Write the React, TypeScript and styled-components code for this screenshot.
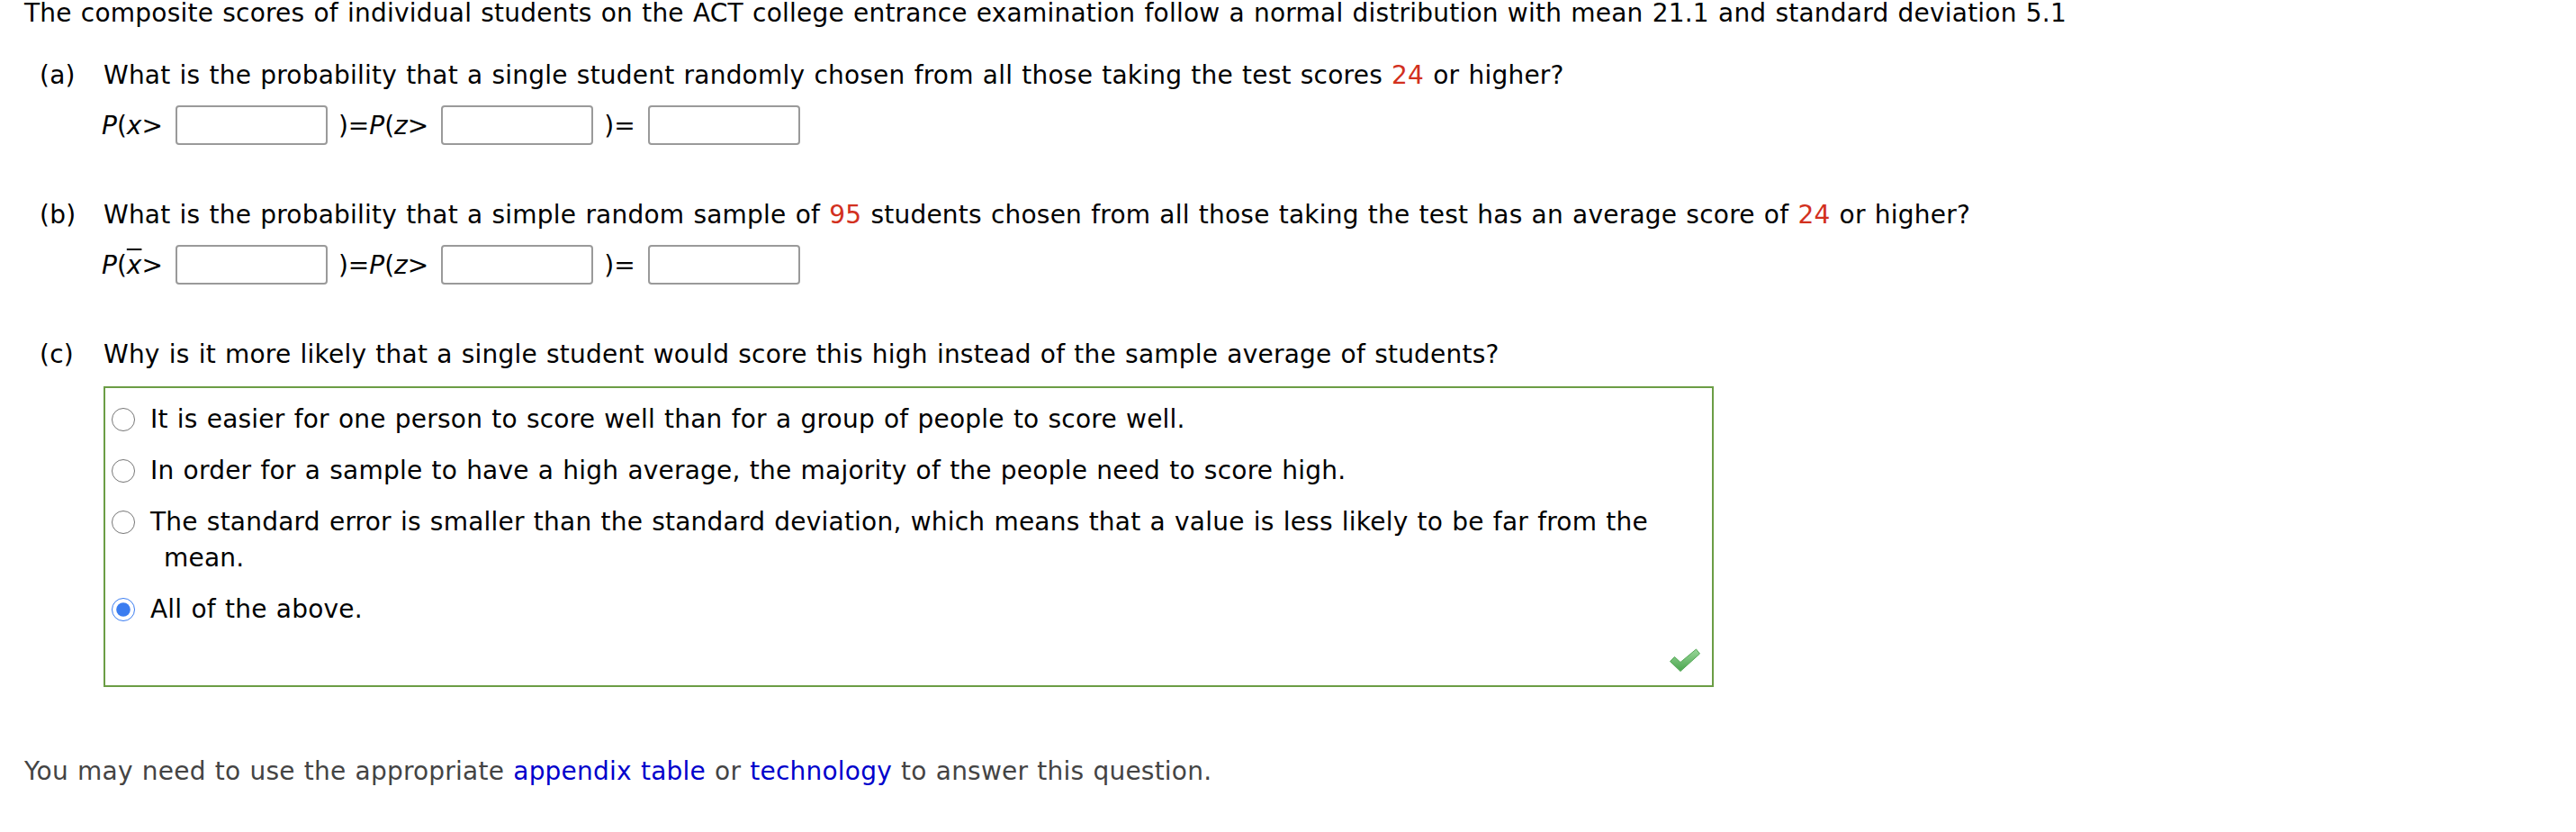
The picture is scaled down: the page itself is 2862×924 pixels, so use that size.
import React from 'react';
import styled, { createGlobalStyle } from 'styled-components';

const GlobalStyle = createGlobalStyle`
  html, body {
    margin: 0;
    padding: 0;
    background: #ffffff;
  }
  body {
    font-family: 'DejaVu Sans', Verdana, sans-serif;
    color: #000000;
  }
`;

const Page = styled.div`
  padding: 0 27px;
  font-size: 28px;
  letter-spacing: 0.22px;
  word-spacing: 1px;
`;

const Intro = styled.p`
  margin: 0;
  line-height: 30px;
  white-space: nowrap;
`;

const Part = styled.section<{ $top: number }>`
  display: grid;
  grid-template-columns: 71px 1fr;
  margin-left: 17px;
  margin-top: ${(p) => p.$top}px;
`;

const Label = styled.div`
  line-height: 30px;
`;

const Body = styled.div`
  display: flex;
  flex-direction: column;
  align-items: flex-start;
`;

const Question = styled.div`
  line-height: 30px;
  white-space: nowrap;
`;

const Hot = styled.span`
  color: #d2301e;
`;

const EqRow = styled.div`
  display: flex;
  align-items: center;
  height: 44px;
  margin-top: 18px;
  margin-left: -2px;
  white-space: nowrap;
  letter-spacing: 0;
`;

const Var = styled.i`
  font-style: italic;
`;

const Bar = styled.i`
  font-style: italic;
  text-decoration: overline;
  text-decoration-thickness: 2px;
`;

const AnswerBox = styled.input.attrs({ type: 'text' })`
  box-sizing: border-box;
  width: 169px;
  height: 44px;
  margin: 0 12px 0 14px;
  border: 2px solid #9a9a9a;
  border-radius: 4px;
  background: #ffffff;
  font: inherit;
  outline: none;
`;

const Choices = styled.div`
  box-sizing: border-box;
  width: 1789px;
  margin-top: 20px;
  border: 2px solid #6b9d45;
  padding: 15px 8px 13px 7px;
  display: flex;
  flex-direction: column;
  gap: 17px;
`;

const Option = styled.label`
  display: flex;
  align-items: flex-start;
  gap: 17px;
`;

const Radio = styled.input.attrs({ type: 'radio', name: 'why' })`
  width: 26px;
  height: 26px;
  margin: 7px 0 0 0;
  flex: none;
  accent-color: #3a7cf0;
`;

const OptionText = styled.span`
  line-height: 40px;
  padding-left: 15px;
  text-indent: -15px;
`;

const CheckRow = styled.div`
  display: flex;
  justify-content: flex-end;
  margin-top: 4px;
  padding-right: 4px;
`;

const Footer = styled.p`
  margin: 79px 0 0;
  line-height: 30px;
  color: #444444;
  white-space: nowrap;
`;

const Link = styled.a`
  color: #0000cc;
  text-decoration: none;
`;

const CheckMark = () => (
  <svg width="36" height="30" viewBox="0 0 36 30">
    <defs>
      <linearGradient id="ok" x1="0" y1="0" x2="0" y2="1">
        <stop offset="0" stopColor="#9ad69a" />
        <stop offset="1" stopColor="#4aa64e" />
      </linearGradient>
    </defs>
    <path
      d="M1.5 16.5 L6.5 11.5 L13 17.5 L30.5 3 L34.5 8 L13 27.5 Z"
      fill="url(#ok)"
      stroke="#55a857"
      strokeWidth="1"
      strokeLinejoin="round"
    />
  </svg>
);

const App = () => (
  <>
    <GlobalStyle />
    <Page>
      <Intro>
        The composite scores of individual students on the ACT college entrance examination follow a
        normal distribution with mean 21.1 and standard deviation 5.1
      </Intro>

      <Part $top={39}>
        <Label>(a)</Label>
        <Body>
          <Question>
            What is the probability that a single student randomly chosen from all those taking the test
            scores <Hot>24</Hot> or higher?
          </Question>
          <EqRow>
            <Var>P</Var>(<Var>x</Var>&gt;
            <AnswerBox />
            )=<Var>P</Var>(<Var>z</Var>&gt;
            <AnswerBox />
            )=
            <AnswerBox />
          </EqRow>
        </Body>
      </Part>

      <Part $top={63}>
        <Label>(b)</Label>
        <Body>
          <Question>
            What is the probability that a simple random sample of <Hot>95</Hot> students chosen from all
            those taking the test has an average score of <Hot>24</Hot> or higher?
          </Question>
          <EqRow>
            <Var>P</Var>(<Bar>x</Bar>&gt;
            <AnswerBox />
            )=<Var>P</Var>(<Var>z</Var>&gt;
            <AnswerBox />
            )=
            <AnswerBox />
          </EqRow>
        </Body>
      </Part>

      <Part $top={63}>
        <Label>(c)</Label>
        <Body>
          <Question>
            Why is it more likely that a single student would score this high instead of the sample average
            of students?
          </Question>
          <Choices>
            <Option>
              <Radio />
              <OptionText>It is easier for one person to score well than for a group of people to score well.</OptionText>
            </Option>
            <Option>
              <Radio />
              <OptionText>In order for a sample to have a high average, the majority of the people need to score high.</OptionText>
            </Option>
            <Option>
              <Radio />
              <OptionText>
                The standard error is smaller than the standard deviation, which means that a value is less
                likely to be far from the
                <br />
                mean.
              </OptionText>
            </Option>
            <Option>
              <Radio defaultChecked />
              <OptionText>All of the above.</OptionText>
            </Option>
            <CheckRow>
              <CheckMark />
            </CheckRow>
          </Choices>
        </Body>
      </Part>

      <Footer>
        You may need to use the appropriate <Link href="#">appendix table</Link> or{' '}
        <Link href="#">technology</Link> to answer this question.
      </Footer>
    </Page>
  </>
);

export default App;
